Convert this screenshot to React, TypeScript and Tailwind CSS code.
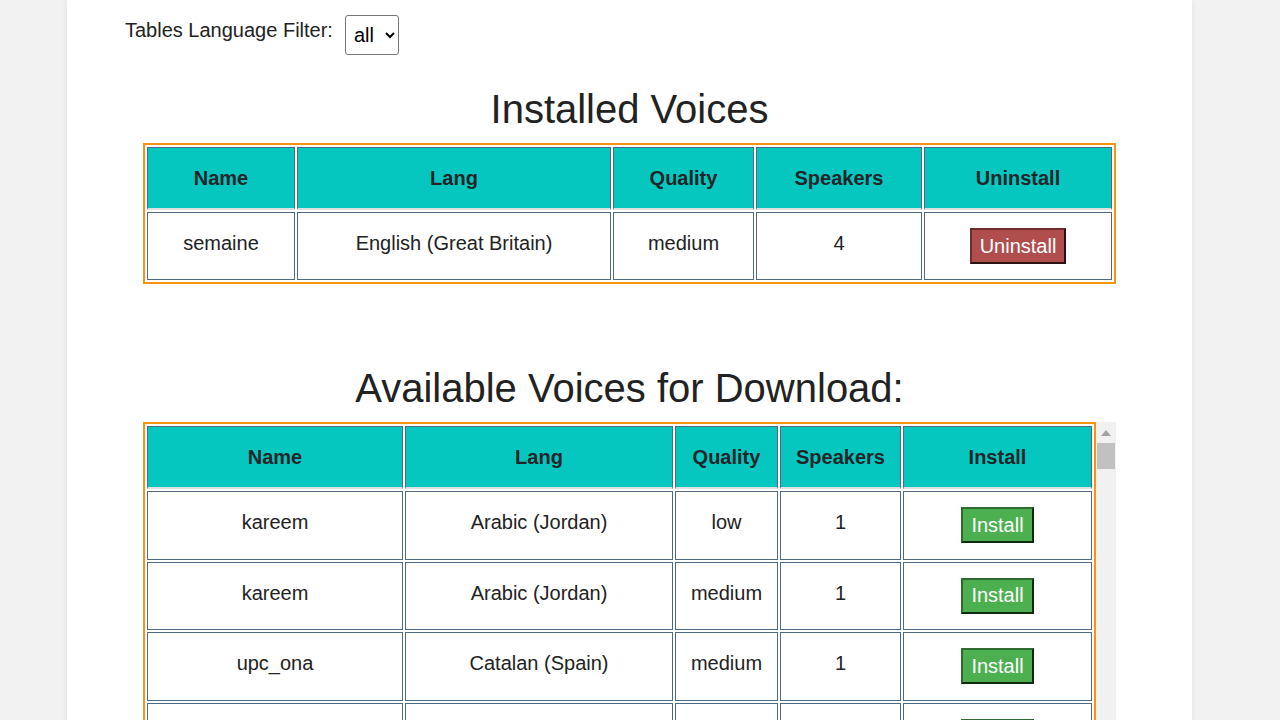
import React from "react";

type Voice = {
  name: string;
  lang: string;
  quality: string;
  speakers: number;
};

const INSTALLED: Voice[] = [
  { name: "semaine", lang: "English (Great Britain)", quality: "medium", speakers: 4 },
];

const AVAILABLE: Voice[] = [
  { name: "kareem", lang: "Arabic (Jordan)", quality: "low", speakers: 1 },
  { name: "kareem", lang: "Arabic (Jordan)", quality: "medium", speakers: 1 },
  { name: "upc_ona", lang: "Catalan (Spain)", quality: "medium", speakers: 1 },
  { name: "upc_ona", lang: "Catalan (Spain)", quality: "x_low", speakers: 1 },
  { name: "upc_pau", lang: "Catalan (Spain)", quality: "x_low", speakers: 1 },
  { name: "jirka", lang: "Czech (Czech Republic)", quality: "low", speakers: 1 },
];

const thClass =
  "border border-[#4f6a85] border-b-2 border-b-[#dde1e4] bg-[#06c7bf] h-[63px] text-[20px] font-bold text-[#212529] text-center align-middle";
const tdClass =
  "border border-[#4f6a85] bg-white text-[20px] text-[#222] text-center align-middle";

function ActionButton({ label, tone }: { label: string; tone: "install" | "uninstall" }) {
  const toneClass =
    tone === "install"
      ? "bg-[#4caf50] border-t-[#2f6b31] border-l-[#2f6b31] border-b-[#0f2a10] border-r-[#0f2a10]"
      : "bg-[#b04d4d] border-t-[#6e2c2c] border-l-[#6e2c2c] border-b-[#2b1111] border-r-[#2b1111]";
  return (
    <button
      className={`${toneClass} border-2 border-solid h-[36px] px-2 text-[20px] leading-[23px] text-white`}
    >
      {label}
    </button>
  );
}

function VoiceTable({
  voices,
  widths,
  actionLabel,
  tone,
  rowHeight,
}: {
  voices: Voice[];
  widths: number[];
  actionLabel: string;
  tone: "install" | "uninstall";
  rowHeight: string;
}) {
  return (
    <table className="border-2 border-[#f7930f] border-separate border-spacing-[2px] bg-white">
      <thead>
        <tr>
          <th className={thClass} style={{ width: widths[0] }}>Name</th>
          <th className={thClass} style={{ width: widths[1] }}>Lang</th>
          <th className={thClass} style={{ width: widths[2] }}>Quality</th>
          <th className={thClass} style={{ width: widths[3] }}>Speakers</th>
          <th className={thClass} style={{ width: widths[4] }}>{actionLabel}</th>
        </tr>
      </thead>
      <tbody>
        {voices.map((v, i) => (
          <tr key={`${v.name}-${v.quality}-${i}`} className={rowHeight}>
            <td className={`${tdClass} pb-[6px]`}>{v.name}</td>
            <td className={`${tdClass} pb-[6px]`}>{v.lang}</td>
            <td className={`${tdClass} pb-[6px]`}>{v.quality}</td>
            <td className={`${tdClass} pb-[6px]`}>{v.speakers}</td>
            <td className={tdClass}>
              <ActionButton label={actionLabel} tone={tone} />
            </td>
          </tr>
        ))}
      </tbody>
    </table>
  );
}

export default function App() {
  return (
    <div
      className="min-h-screen bg-[#f2f2f2]"
      style={{ fontFamily: '"Liberation Sans", Arial, sans-serif' }}
    >
      <div className="ml-[67px] w-[1125px] min-h-screen bg-white shadow-[0_0_6px_rgba(0,0,0,0.08)] pt-[15px] pb-10">
        <div className="flex items-start pl-[58px]">
          <label className="mt-[4px] text-[20px] leading-[23px] text-[#222]">
            Tables Language Filter:
          </label>
          <select
            defaultValue="all"
            className="ml-[12px] h-[40px] w-[54px] rounded-[3px] border border-[#767676] bg-white pl-[4px] text-[20px] text-black"
          >
            <option value="all">all</option>
            <option value="en">en</option>
            <option value="ar">ar</option>
            <option value="ca">ca</option>
          </select>
        </div>

        <h2 className="mt-[31px] text-center text-[40px] leading-[46px] text-[#222]">
          Installed Voices
        </h2>
        <div className="mt-[11px] flex justify-center">
          <VoiceTable
            voices={INSTALLED}
            widths={[148, 314, 141, 166, 188]}
            actionLabel="Uninstall"
            tone="uninstall"
            rowHeight="h-[68px]"
          />
        </div>

        <h2 className="mt-[81px] text-center text-[40px] leading-[46px] text-[#222]">
          Available Voices for Download:
        </h2>
        <div className="mt-[11px] flex justify-center">
          <div className="flex h-[420px] w-[973px] overflow-hidden">
            <div className="w-[953px]">
              <VoiceTable
                voices={AVAILABLE}
                widths={[256, 268, 103, 121, 189]}
                actionLabel="Install"
                tone="install"
                rowHeight="h-[68.5px]"
              />
            </div>
            <div className="flex w-[20px] flex-col items-center bg-[#f1f1f1]">
              <svg width="10" height="6" viewBox="0 0 10 6" className="mt-[8px]">
                <path d="M0 6 L5 0 L10 6 Z" fill="#a3a3a3" />
              </svg>
              <div className="mt-[7px] h-[26px] w-[18px] bg-[#c1c1c1]" />
            </div>
          </div>
        </div>
      </div>
    </div>
  );
}
